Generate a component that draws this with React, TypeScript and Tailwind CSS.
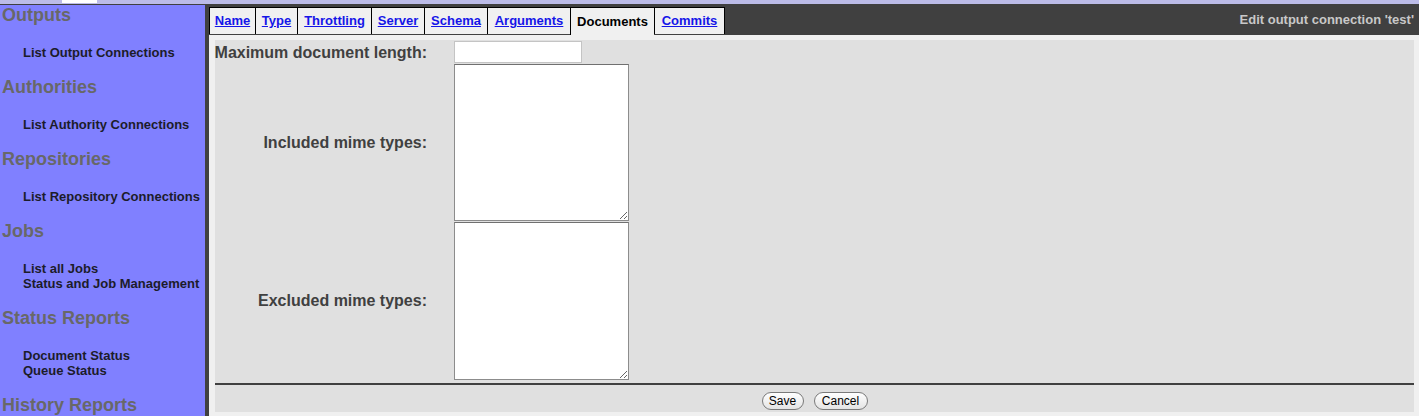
const tabs = [
  { name: 'Name', w: 'w-[46px]' },
  { name: 'Type', w: 'w-[42px]' },
  { name: 'Throttling', w: 'w-[74px]' },
  { name: 'Server', w: 'w-[53px]' },
  { name: 'Schema', w: 'w-[63px]' },
  { name: 'Arguments', w: 'w-[83px]' },
  { name: 'Documents', w: 'w-[84px]' },
  { name: 'Commits', w: 'w-[71px]' },
];

const nav = [
  { title: 'Outputs', links: ['List Output Connections'] },
  { title: 'Authorities', links: ['List Authority Connections'] },
  { title: 'Repositories', links: ['List Repository Connections'] },
  { title: 'Jobs', links: ['List all Jobs', 'Status and Job Management'] },
  { title: 'Status Reports', links: ['Document Status', 'Queue Status'] },
  { title: 'History Reports', links: [] },
];

export default function App() {
  return (
    <div
      className="h-[416px] w-[1419px] overflow-hidden flex flex-col bg-[#f0f0f0]"
      style={{ fontFamily: '"Liberation Sans", Arial, sans-serif' }}
    >
      {/* top strip */}
      <div className="h-[4px] bg-[#bcbce8] flex">
        <div className="w-[62px]" />
        <div className="w-[35px] h-[3px] bg-white" />
      </div>
      <div className="h-[1px] bg-[#404040]" />

      <div className="flex flex-1 min-h-0">
        {/* sidebar */}
        <div className="w-[205px] bg-[#8080ff] overflow-hidden">
          {nav.map((s) => (
            <div key={s.title} className="mb-[17px]">
              <div className="text-[18px] leading-[21px] font-bold text-[#686868] pl-[2px] mb-[19px] whitespace-nowrap">
                {s.title}
              </div>
              {s.links.length > 0 && (
                <div className="pl-[23px]">
                  {s.links.map((l) => (
                    <div key={l} className="text-[13px] leading-[15px] font-bold text-[#1c1c2a] whitespace-nowrap">
                      {l}
                    </div>
                  ))}
                </div>
              )}
            </div>
          ))}
        </div>
        <div className="w-[4px] bg-[#404040]" />

        {/* content */}
        <div className="flex-1 flex flex-col min-w-0">
          <div className="h-[30px] bg-[#404040] flex items-start justify-between pt-[2px]">
            <div className="flex items-start">
              {tabs.map((t, i) => {
                const active = t.name === 'Documents';
                return (
                  <div
                    key={t.name}
                    className={
                      t.w +
                      ' flex items-center justify-center bg-[#f0f0f0] border-t border-l border-black text-[13px] font-bold ' +
                      (i === tabs.length - 1 ? 'border-r ' : '') +
                      (active ? 'h-[28px] text-black' : 'h-[27px] text-[#1515e8] underline')
                    }
                  >
                    {t.name}
                  </div>
                );
              })}
            </div>
            <div className="text-[13px] font-bold text-[#c8c8c8] pr-[5px] pt-[3px]">
              Edit output connection 'test'
            </div>
          </div>

          <div className="flex-1 pt-[5px] pl-[6px] pr-[5px] pb-[4px]">
            <div className="h-full bg-[#e0e0e0] flex flex-col pt-[1px]">
              <div className="grid grid-cols-[239px_1fr]">
                <div className="text-[16px] font-bold text-[#404040] whitespace-nowrap pr-[27px] flex items-center justify-end h-[23px]">
                  Maximum document length:
                </div>
                <div>
                  <input className="block w-[128px] h-[22px] bg-white border border-[#c4c4c4] outline-none" />
                </div>
                <div className="text-[16px] font-bold text-[#404040] whitespace-nowrap pr-[27px] flex items-center justify-end h-[157px]">
                  Included mime types:
                </div>
                <div>
                  <textarea className="block w-[175px] h-[157px] bg-white border border-[#8c8c8c] border-t-[#707070] outline-none" />
                </div>
                <div className="text-[16px] font-bold text-[#404040] whitespace-nowrap pr-[27px] flex items-center justify-end h-[158px] mt-[1px]">
                  Excluded mime types:
                </div>
                <div className="mt-[1px]">
                  <textarea className="block w-[175px] h-[158px] bg-white border border-[#8c8c8c] border-t-[#707070] outline-none" />
                </div>
              </div>
              <div className="h-[2px] bg-[#404040] mt-[3px]" />
              <div className="flex justify-center gap-[10px] mt-[7px]">
                <button className="h-[18px] w-[42px] rounded-full border border-[#7a7a7a] bg-gradient-to-b from-white to-[#e4e4e4] text-[12px] text-black leading-none">
                  Save
                </button>
                <button className="h-[18px] w-[54px] rounded-full border border-[#7a7a7a] bg-gradient-to-b from-white to-[#e4e4e4] text-[12px] text-black leading-none">
                  Cancel
                </button>
              </div>
            </div>
          </div>
        </div>
      </div>
    </div>
  );
}
